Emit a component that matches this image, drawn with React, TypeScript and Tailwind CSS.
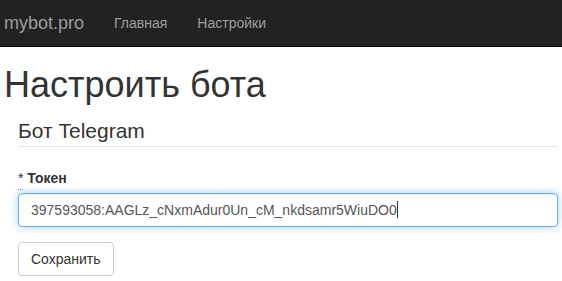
export default function App() {
  const font = { fontFamily: '"Liberation Sans", Arial, sans-serif' };
  return (
    <div className="min-h-[281px] bg-white text-[#333] text-[14px] leading-[20px]" style={font}>
      <nav className="h-[47px] bg-[#222] border-b border-[#080808] flex items-center">
        <span className="pl-[4px] pr-[15px] text-[18px] leading-[20px] text-[#9d9d9d]">mybot.pro</span>
        <span className="px-[15px] text-[#9d9d9d]">Главная</span>
        <span className="px-[15px] text-[#9d9d9d]">Настройки</span>
      </nav>
      <div className="pl-[4px] pr-[4px]">
        <h1 className="mt-[18px] text-[36px] leading-[39.6px] font-normal">Настроить бота</h1>
        <div className="pl-[14px] mt-[11px]">
          <div className="text-[21px] leading-[30px] border-b border-[#e5e5e5] mb-[21px]">Бот Telegram</div>
          <div className="mb-[5px] leading-[20px]">
            <span className="underline decoration-dotted decoration-[#999] underline-offset-[6px]">*</span>{' '}
            <span className="font-bold">Токен</span>
          </div>
          <div className="h-[34px] rounded-[4px] border border-[#66afe9] px-[12px] flex items-center text-[#555] shadow-[inset_0_1px_1px_rgba(0,0,0,0.075),0_0_8px_rgba(102,175,233,0.6)] mb-[15px]">
            <span>397593058:AAGLz_cNxmAdur0Un_cM_nkdsamr5WiuDO0</span>
            <span className="inline-block w-[1px] h-[17px] bg-[#333]" />
          </div>
          <button className="h-[34px] px-[12px] rounded-[4px] border border-[#ccc] bg-white text-[#333] text-[14px]">Сохранить</button>
        </div>
      </div>
    </div>
  );
}
